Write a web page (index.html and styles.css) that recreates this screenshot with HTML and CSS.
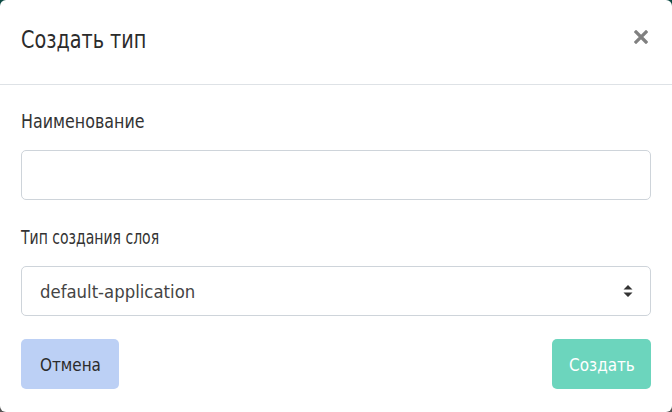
FILE: index.html
```html
<!DOCTYPE html>
<html lang="ru">
<head>
<meta charset="utf-8">
<title>Создать тип</title>
<link rel="stylesheet" href="styles.css">
</head>
<body>
<div class="modal">
  <div class="modal-header">
    <h1 class="modal-title"><span class="nt">Создать тип</span></h1>
    <button class="close" aria-label="Закрыть">
      <svg width="14" height="14" viewBox="0 0 14 14"><path d="M2 2 L12 12 M12 2 L2 12" stroke="#808080" stroke-width="3.2" stroke-linecap="square"/></svg>
    </button>
  </div>
  <div class="modal-body">
    <div class="group">
      <label class="label"><span class="nt wide">Наименование</span></label>
      <div class="input"></div>
    </div>
    <div class="group">
      <label class="label"><span class="nt">Тип создания слоя</span></label>
      <div class="input select">
        <span class="nt latin">default-application</span>
        <svg class="arrows" width="10" height="14" viewBox="0 0 10 14"><path d="M5 1 L9.5 5.5 L0.5 5.5 Z M0.5 8.5 L9.5 8.5 L5 13 Z" fill="#333"/></svg>
      </div>
    </div>
    <div class="footer">
      <button class="btn btn-cancel"><span class="nt c">Отмена</span></button>
      <button class="btn btn-create"><span class="nt c">Создать</span></button>
    </div>
  </div>
</div>
</body>
</html>
```
FILE: styles.css
```css
html, body {
  margin: 0;
  padding: 0;
  width: 672px;
  height: 412px;
  overflow: hidden;
}
body {
  background: linear-gradient(#0d4a44 0%, #3a4a48 50%, #555 100%);
  font-family: "DejaVu Sans", sans-serif;
  font-stretch: condensed;
  color: #333;
}
.nt {
  display: inline-block;
  white-space: nowrap;
  transform: scaleX(0.82);
  transform-origin: left center;
}
.nt.wide {
  transform: scaleX(0.93);
}
.modal-title .nt {
  transform: scaleX(0.89);
}
.nt.latin {
  transform: scaleX(1.02);
}
.nt.c {
  transform: scaleX(0.94);
  transform-origin: center center;
}
.modal {
  width: 672px;
  height: 412px;
  background: #fff;
  border-radius: 6px;
}
.modal-header {
  height: 84px;
  border-bottom: 1px solid #dee2e6;
  display: flex;
  align-items: center;
  justify-content: space-between;
  padding: 0 24px 0 21px;
}
.modal-title {
  margin: 0 0 4px 0;
  font-size: 24px;
  font-weight: normal;
  color: #2b2b2b;
  line-height: 1;
}
.close {
  border: 0;
  background: none;
  padding: 0;
  margin-bottom: 10px;
  display: flex;
}
.modal-body {
  padding: 25px 21px 0 21px;
}
.group {
  display: flex;
  flex-direction: column;
}
.group + .group {
  margin-top: 26px;
}
.label {
  font-size: 19px;
  line-height: 27px;
  color: #333;
  margin-bottom: 13px;
  margin-top: -2px;
  padding-bottom: 2px;
}
.input {
  height: 50px;
  border: 1px solid #ced4da;
  border-radius: 5px;
  box-sizing: border-box;
  background: #fff;
}
.select {
  display: flex;
  align-items: center;
  justify-content: space-between;
  padding: 0 17px 0 18px;
  font-size: 18px;
  color: #444;
}
.arrows {
  display: block;
}
.footer {
  display: flex;
  justify-content: space-between;
  margin-top: 23px;
}
.btn {
  height: 50px;
  border: 0;
  border-radius: 5px;
  font-family: inherit;
  font-stretch: condensed;
  font-size: 18px;
  padding: 0;
}
.btn-cancel {
  width: 98px;
  background: #bcd0f5;
  color: #2b2b2b;
}
.btn-create {
  width: 99px;
  background: #6cd5bd;
  color: #fff;
}
```
